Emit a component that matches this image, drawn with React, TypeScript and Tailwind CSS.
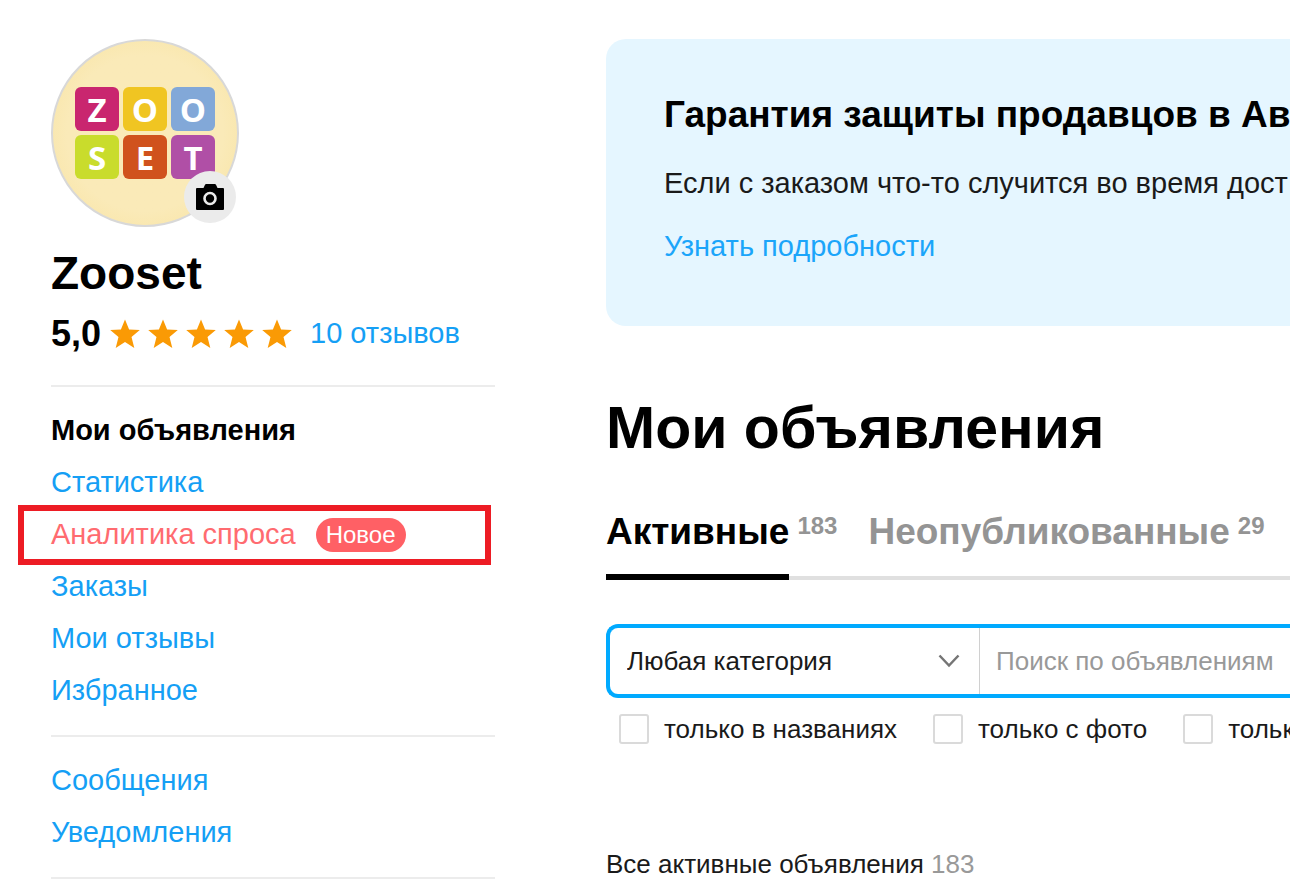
import { useState } from 'react';

interface MenuItem {
  label: string;
  active?: boolean;
  isNew?: boolean;
}

const mainMenu: MenuItem[] = [
  { label: 'Мои объявления', active: true },
  { label: 'Статистика' },
  { label: 'Аналитика спроса', isNew: true },
  { label: 'Заказы' },
  { label: 'Мои отзывы' },
  { label: 'Избранное' },
];

const secondMenu: MenuItem[] = [{ label: 'Сообщения' }, { label: 'Уведомления' }];

const tiles = [
  { letter: 'Z', color: 'bg-[#c9266f]' },
  { letter: 'O', color: 'bg-[#f0c522]' },
  { letter: 'O', color: 'bg-[#82a8d8]' },
  { letter: 'S', color: 'bg-[#c9dc2c]' },
  { letter: 'E', color: 'bg-[#d0521d]' },
  { letter: 'T', color: 'bg-[#b04fa6]' },
];

const tabs = [
  { label: 'Активные', count: 183 },
  { label: 'Неопубликованные', count: 29 },
];

const filters = ['только в названиях', 'только с фото', 'тольк'];

const Star = () => (
  <svg viewBox="0 0 30 30" className="w-[30px] h-[30px]" fill="#fa9a05" aria-hidden="true">
    <path d="M15 .4l4.1 10.1 10.7.6-8.3 7 2.8 10.9L15 23l-9.3 6 2.8-10.9-8.3-7 10.7-.6z" />
  </svg>
);

const Avatar = () => (
  <div className="relative w-[188px] h-[188px]">
    <div className="w-full h-full rounded-full border-2 border-[#d8d8d8] bg-radial from-[#faeab8] from-60% to-[#f8e29d] flex items-center justify-center">
      <div className="grid grid-cols-3 gap-1">
        {tiles.map((tile, i) => (
          <span
            key={i}
            className={`w-11 h-11 rounded-md flex items-center justify-center text-white font-['Open_Sans',sans-serif] font-bold text-[33px] leading-none ${tile.color}`}
          >
            {tile.letter}
          </span>
        ))}
      </div>
    </div>
    <button
      aria-label="Изменить фото"
      className="absolute right-[3px] bottom-1 w-[52px] h-[52px] rounded-full bg-[#ebebeb] flex items-center justify-center"
    >
      <svg viewBox="0 0 28 26" className="w-7 h-[26px]" aria-hidden="true">
        <path d="M1 4h6.500l1.500-3.200q.4-.8 1.200-.8h8.600q.8 0 1.200.8L21.500 4H27a1 1 0 0 1 1 1v20a1 1 0 0 1-1 1H1a1 1 0 0 1-1-1V5a1 1 0 0 1 1-1z" />
        <circle cx="14" cy="14.500" r="5.500" fill="none" stroke="#ebebeb" strokeWidth="2.600" />
      </svg>
    </button>
  </div>
);

const Menu = ({ items }: { items: MenuItem[] }) => (
  <ul className="border-t-2 border-[#ececec] py-[18px]">
    {items.map((item) => (
      <li key={item.label} className="relative h-[52px] flex items-center gap-5 text-[29px] whitespace-nowrap">
        <a
          href="#"
          className={
            item.active ? 'font-bold text-black' : item.isNew ? 'text-[#ff6b70]' : 'text-[#159ff5]'
          }
        >
          {item.label}
        </a>
        {item.isNew && (
          <>
            <span className="h-[34px] px-[10px] rounded-full bg-[#ff6065] text-white text-[24px] leading-[34px]">
              Новое
            </span>
            <span className="absolute -left-[33px] right-1 -top-1 -bottom-1 border-[6px] border-[#ed1c24] pointer-events-none" />
          </>
        )}
      </li>
    ))}
  </ul>
);

const Sidebar = () => (
  <aside className="w-[444px] shrink-0">
    <Avatar />
    <h2 className="mt-5 text-[46px] leading-[52px] font-bold text-black">Zooset</h2>
    <div className="mt-[15px] mb-[31px] h-10 flex items-center">
      <span className="text-[36px] leading-10 font-bold text-black">5,0</span>
      <div className="ml-[9px] flex gap-2">
        {[1, 2, 3, 4, 5].map((n) => (
          <Star key={n} />
        ))}
      </div>
      <a href="#" className="ml-[18px] text-[29px] text-[#159ff5] whitespace-nowrap">
        10 отзывов
      </a>
    </div>
    <Menu items={mainMenu} />
    <Menu items={secondMenu} />
    <div className="border-t-2 border-[#ececec]" />
  </aside>
);

export default function App() {
  const [activeTab, setActiveTab] = useState(0);
  const [query, setQuery] = useState('');

  return (
    <div className="min-h-screen bg-white overflow-hidden flex gap-[111px] pl-[51px] pt-[39px] font-['Liberation_Sans',Arial,sans-serif] text-[#1a1a1a]">
      <Sidebar />

      <main className="flex-1 min-w-0 overflow-hidden whitespace-nowrap">
        <section className="rounded-l-[20px] bg-[#e5f6ff] pl-[58px] pt-[50px] pb-[54px] overflow-hidden">
          <h3 className="text-[37px] leading-[52px] font-bold text-black">Гарантия защиты продавцов в Ав</h3>
          <p className="mt-4 text-[29px] leading-[52px]">Если с заказом что-то случится во время дост</p>
          <a href="#" className="block mt-[11px] text-[29px] leading-[52px] text-[#1ba5fa]">
            Узнать подробности
          </a>
        </section>

        <h1 className="mt-[66px] text-[59px] leading-[72px] font-bold text-black">Мои объявления</h1>

        <div className="mt-[43px] flex gap-[31px] border-b-4 border-[#e0e0e0]">
          {tabs.map((tab, i) => (
            <button
              key={tab.label}
              onClick={() => setActiveTab(i)}
              className={`flex items-start gap-2 font-bold cursor-pointer ${
                i === activeTab ? 'text-black' : 'text-[#949494]'
              }`}
            >
              <span
                className={`relative h-[69px] text-[37px] leading-[50px] ${
                  i === activeTab
                    ? "after:content-[''] after:absolute after:inset-x-0 after:-bottom-1 after:h-[6px] after:bg-black"
                    : ''
                }`}
              >
                {tab.label}
              </span>
              <span className="text-[24px] leading-[38px] text-[#949494]">{tab.count}</span>
            </button>
          ))}
        </div>

        <form className="mt-11">
          <div className="h-[74px] flex border-4 border-r-0 border-[#0af] rounded-l-xl">
            <div className="relative w-[370px] shrink-0 border-r border-[#d0d0d0]">
              <select
                aria-label="Категория"
                className="appearance-none w-full h-full pl-[17px] bg-transparent text-[26px] outline-none cursor-pointer"
              >
                <option>Любая категория</option>
              </select>
              <svg
                viewBox="0 0 22 14"
                className="absolute right-[19px] top-[26px] w-[22px] h-[14px] pointer-events-none"
                fill="none"
                stroke="#757575"
                strokeWidth="2.500"
                aria-hidden="true"
              >
                <path d="M1.500 1.500L11 11.500l9.500-10" />
              </svg>
            </div>
            <input
              type="text"
              aria-label="Поиск"
              value={query}
              onChange={(e) => setQuery(e.target.value)}
              placeholder="Поиск по объявлениям"
              className="flex-1 min-w-0 pl-4 text-[26px] placeholder:text-[#999999] outline-none"
            />
          </div>

          <div className="mt-[11px] pl-[13px] h-10 flex gap-9">
            {filters.map((filter) => (
              <label key={filter} className="flex items-center gap-[15px] text-[26px] cursor-pointer">
                <input
                  type="checkbox"
                  className="appearance-none w-[30px] h-[30px] shrink-0 rounded-[3px] border-2 border-[#dadada] checked:bg-[#0af]"
                />
                {filter}
              </label>
            ))}
          </div>
        </form>

        <p className="mt-[95px] text-[26px] leading-10">
          Все активные объявления <span className="text-[#999999]">183</span>
        </p>
      </main>
    </div>
  );
}
